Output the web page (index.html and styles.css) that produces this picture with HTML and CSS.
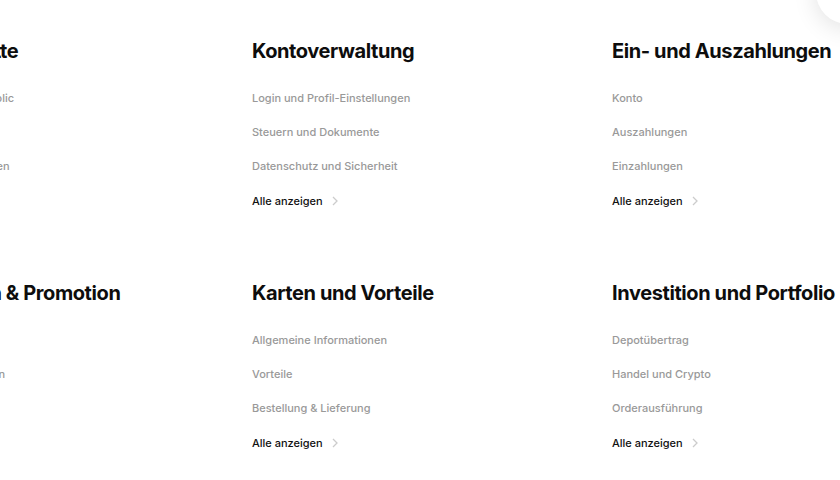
FILE: index.html
```html
<!DOCTYPE html>
<html lang="de">
<head>
<meta charset="utf-8">
<link rel="stylesheet" href="styles.css">
</head>
<body>
<div class="fab" aria-hidden="true"></div>
<main class="grid">
  <section class="group">
    <h2>Erste Schritte</h2>
    <ul>
      <li>Neu bei Trade Republic</li>
      <li>Verifizierung</li>
      <li>Identität prüfen lassen</li>
    </ul>
    <a class="more" href="#">Alle anzeigen <svg viewBox="0 0 8 12" class="chev"><path d="M2 2l4 4-4 4"/></svg></a>
  </section>
  <section class="group">
    <h2>Kontoverwaltung</h2>
    <ul>
      <li>Login und Profil-Einstellungen</li>
      <li>Steuern und Dokumente</li>
      <li>Datenschutz und Sicherheit</li>
    </ul>
    <a class="more" href="#">Alle anzeigen <svg viewBox="0 0 8 12" class="chev"><path d="M2 2l4 4-4 4"/></svg></a>
  </section>
  <section class="group">
    <h2>Ein- und Auszahlungen</h2>
    <ul>
      <li>Konto</li>
      <li>Auszahlungen</li>
      <li>Einzahlungen</li>
    </ul>
    <a class="more" href="#">Alle anzeigen <svg viewBox="0 0 8 12" class="chev"><path d="M2 2l4 4-4 4"/></svg></a>
  </section>
  <section class="group">
    <h2>Neukunden &amp; Promotion</h2>
    <ul>
      <li>Prämien</li>
      <li>Details der Promotion</li>
      <li>Gutscheine</li>
    </ul>
    <a class="more" href="#">Alle anzeigen <svg viewBox="0 0 8 12" class="chev"><path d="M2 2l4 4-4 4"/></svg></a>
  </section>
  <section class="group">
    <h2>Karten und Vorteile</h2>
    <ul>
      <li>Allgemeine Informationen</li>
      <li>Vorteile</li>
      <li>Bestellung &amp; Lieferung</li>
    </ul>
    <a class="more" href="#">Alle anzeigen <svg viewBox="0 0 8 12" class="chev"><path d="M2 2l4 4-4 4"/></svg></a>
  </section>
  <section class="group">
    <h2>Investition und Portfolio</h2>
    <ul>
      <li>Depotübertrag</li>
      <li>Handel und Crypto</li>
      <li>Orderausführung</li>
    </ul>
    <a class="more" href="#">Alle anzeigen <svg viewBox="0 0 8 12" class="chev"><path d="M2 2l4 4-4 4"/></svg></a>
  </section>
</main>
</body>
</html>
```
FILE: styles.css
```css
html, body {
  margin: 0;
  padding: 0;
  background: #ffffff;
  overflow: hidden;
  width: 840px;
  height: 480px;
}
body {
  font-family: Inter, "Noto Sans", sans-serif;
  color: #111;
  position: relative;
}
.grid {
  display: grid;
  grid-template-columns: repeat(3, 360px);
  row-gap: 0;
  margin-left: -108px;
  padding-top: 38px;
  width: 1080px;
}
.group {
  height: 242px;
}
h2 {
  margin: 0;
  font-size: 20px;
  line-height: 26px;
  font-weight: 700;
  letter-spacing: -0.4px;
  color: #0d0d0d;
}
ul {
  list-style: none;
  margin: 26px 0 0;
  padding: 0;
}
li {
  font-size: 11px;
  line-height: 16px;
  height: 34px;
  color: #999999;
  font-weight: 500;
}
.more {
  display: flex;
  align-items: center;
  gap: 6px;
  height: 16px;
  margin-top: 1px;
  font-size: 11px;
  font-weight: 500;
  color: #111;
  text-decoration: none;
}
.chev {
  width: 8px;
  height: 12px;
  margin-left: 2px;
}
.chev path {
  fill: none;
  stroke: #cccccc;
  stroke-width: 1.3;
}
.fab {
  position: absolute;
  right: -40px;
  top: -40px;
  width: 64px;
  height: 64px;
  border-radius: 50%;
  background: #fff;
  box-shadow: 0 4px 24px rgba(0,0,0,0.12);
}
```
